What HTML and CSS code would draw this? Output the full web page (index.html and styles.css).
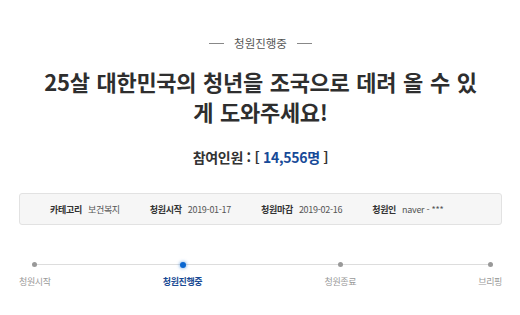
FILE: index.html
```html
<!DOCTYPE html>
<html lang="ko">
<head>
    <meta charset="UTF-8">
    <title>청원진행중</title>
    <link rel="stylesheet" href="styles.css">
</head>
<body>
    <div class="petition">
        <!-- Status -->
        <div class="status">청원진행중</div>

        <!-- Title -->
        <h1 class="title">25살 대한민국의 청년을 조국으로 데려 올 수 있게 도와주세요!</h1>

        <!-- Count -->
        <div class="count">참여인원 : [ <span class="count-num">14,556명</span> ]</div>

        <!-- Info -->
        <ul class="info">
            <li><b>카테고리</b>보건복지</li>
            <li><b>청원시작</b>2019-01-17</li>
            <li><b>청원마감</b>2019-02-16</li>
            <li><b>청원인</b>naver - ***</li>
        </ul>

        <!-- Progress -->
        <ol class="steps">
            <li class="step"><span class="dot"></span>청원시작</li>
            <li class="step active"><span class="dot"></span>청원진행중</li>
            <li class="step"><span class="dot"></span>청원종료</li>
            <li class="step"><span class="dot"></span>브리핑</li>
        </ol>
    </div>
</body>
</html>
```

FILE: styles.css
```css
/* Reset */
* {
    margin: 0;
    padding: 0;
    box-sizing: border-box;
}

body {
    font-family: 'Noto Sans CJK KR', 'Noto Sans', sans-serif;
    background: #fff;
    color: #333;
}

.petition {
    padding: 35px 18px 0 19px;
}

/* Status label */
.status {
    display: flex;
    justify-content: center;
    align-items: center;
    gap: 10px;
    font-size: 11.5px;
    line-height: 16px;
    color: #555;
}

.status::before,
.status::after {
    content: "";
    width: 15px;
    height: 1px;
    background: #888;
}

/* Title */
.title {
    width: 440px;
    margin: 15px auto 0;
    font-size: 22px;
    font-weight: 700;
    line-height: 30px;
    letter-spacing: -0.3px;
    word-spacing: 1px;
    word-break: break-all;
    text-align: center;
    color: #2e2e2e;
}

/* Count */
.count {
    margin-top: 21px;
    font-size: 14px;
    font-weight: 700;
    line-height: 20px;
    letter-spacing: -0.3px;
    text-align: center;
    color: #333;
}

.count-num {
    color: #174a98;
}

/* Info box */
.info {
    list-style: none;
    display: flex;
    gap: 30px;
    margin-top: 26px;
    height: 32px;
    padding: 0 30px;
    align-items: center;
    background: #f6f6f6;
    border: 1px solid #e2e2e2;
    border-radius: 3px;
    font-size: 9px;
    color: #555;
    letter-spacing: -0.3px;
}

.info b {
    color: #333;
    margin-right: 6px;
}

/* Steps */
.steps {
    list-style: none;
    position: relative;
    display: flex;
    justify-content: space-between;
    margin-top: 37px;
}

.steps::before {
    content: "";
    position: absolute;
    top: 2px;
    left: 15px;
    right: 12px;
    height: 1px;
    background: #ddd;
}

.step {
    position: relative;
    display: flex;
    flex-direction: column;
    align-items: center;
    gap: 8px;
    font-size: 9px;
    line-height: 14px;
    letter-spacing: -0.4px;
    color: #999;
}

.dot {
    width: 5px;
    height: 5px;
    border-radius: 50%;
    background: #999;
}

.step.active {
    margin-left: -10px;
    color: #1b4b94;
    font-weight: 700;
}

.step.active .dot {
    width: 6px;
    height: 6px;
    margin-top: -0.5px;
    margin-bottom: -0.5px;
    background: #0a66d0;
    box-shadow: 0 0 3px 1px rgba(10, 102, 208, 0.35);
}
```
